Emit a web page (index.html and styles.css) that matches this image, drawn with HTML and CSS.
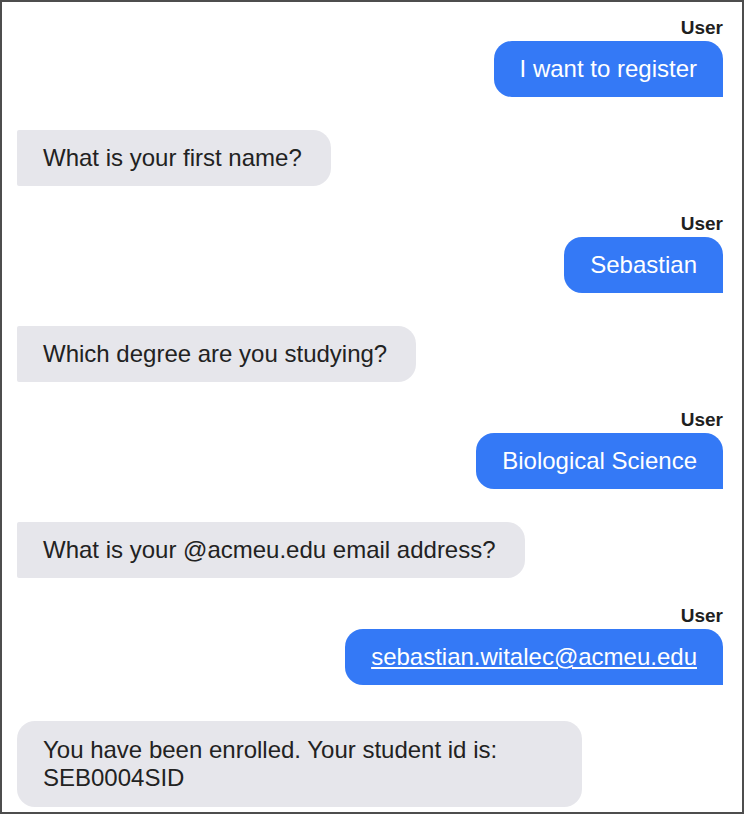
FILE: index.html
```html
<!DOCTYPE html>
<html>
<head>
<meta charset="utf-8">
<link rel="stylesheet" href="styles.css">
</head>
<body>
<div class="frame">
  <div class="chat">
    <div class="msg user">
      <div class="who">User</div>
      <div class="bubble out">I want to register</div>
    </div>
    <div class="msg bot">
      <div class="bubble in">What is your first name?</div>
    </div>
    <div class="msg user">
      <div class="who">User</div>
      <div class="bubble out">Sebastian</div>
    </div>
    <div class="msg bot">
      <div class="bubble in">Which degree are you studying?</div>
    </div>
    <div class="msg user">
      <div class="who">User</div>
      <div class="bubble out">Biological Science</div>
    </div>
    <div class="msg bot">
      <div class="bubble in">What is your @acmeu.edu email address?</div>
    </div>
    <div class="msg user">
      <div class="who">User</div>
      <div class="bubble out"><a class="mail" href="#">sebastian.witalec@acmeu.edu</a></div>
    </div>
    <div class="msg bot last">
      <div class="bubble in">You have been enrolled. Your student id is:<br>SEB0004SID</div>
    </div>
  </div>
</div>
</body>
</html>
```

FILE: styles.css
```css
html, body {
  margin: 0;
  padding: 0;
  background: #ffffff;
}
body {
  font-family: "Liberation Sans", Arial, sans-serif;
  color: #222222;
}
.frame {
  width: 744px;
  height: 814px;
  box-sizing: border-box;
  border: 2px solid #4d4d4d;
  overflow: hidden;
}
.chat {
  display: flex;
  flex-direction: column;
  padding: 15px 19px 0 15px;
}
.msg {
  display: flex;
  flex-direction: column;
}
.msg.user {
  align-items: flex-end;
}
.msg.bot {
  align-items: flex-start;
  margin-top: 33px;
  margin-bottom: 27px;
}
.msg.bot.last {
  margin-top: 36px;
}
.who {
  font-weight: bold;
  font-size: 19px;
  line-height: 22px;
  margin-bottom: 2px;
  color: #1f1f1f;
}
.bubble {
  font-size: 24px;
  line-height: 28px;
  padding: 14px 26px;
}
.bubble.out {
  background: #3479f6;
  color: #ffffff;
  border-radius: 18px 18px 0 18px;
}
.bubble.in {
  background: #e6e6eb;
  color: #222222;
  border-radius: 2px 18px 18px 2px;
  padding-right: 29px;
}
.last .bubble.in {
  border-radius: 18px;
  padding-top: 15px;
  padding-bottom: 15px;
  padding-right: 85px;
}
.mail {
  color: #ffffff;
  text-decoration: underline;
}
```
